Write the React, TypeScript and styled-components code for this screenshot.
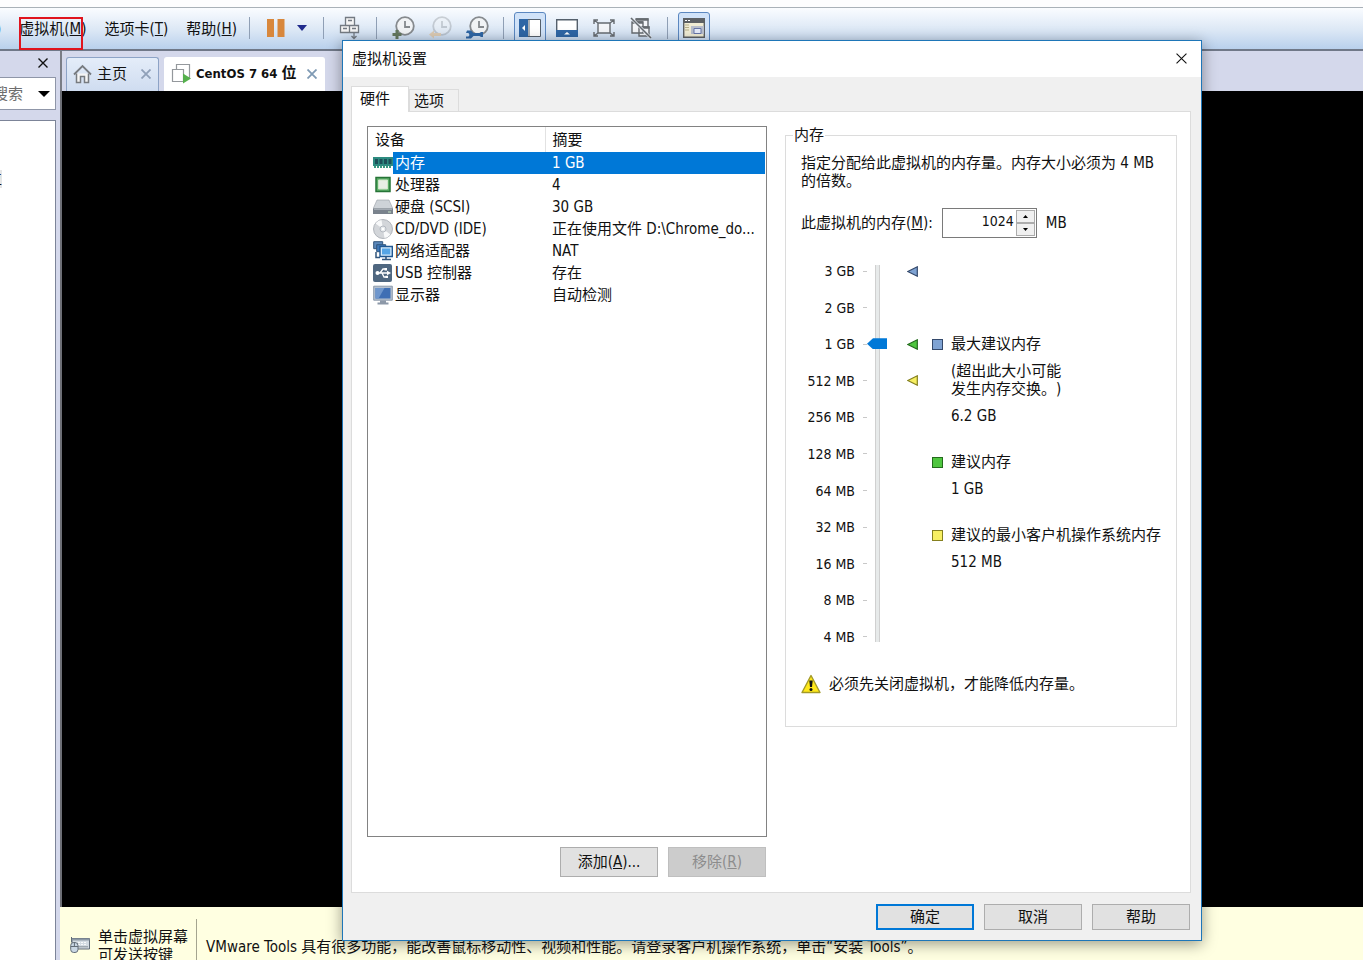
import React, { useState } from "react";
import styled, { createGlobalStyle, css } from "styled-components";

const fontStack = `"DejaVu Sans Condensed", "Noto Sans CJK SC", sans-serif`;

const GlobalStyle = createGlobalStyle`
  *, *::before, *::after { box-sizing: border-box; }
  body { margin: 0; background: #ffffff; text-spacing-trim: space-all; }
  body, button, input { font-family: ${fontStack}; font-size: 15px; line-height: 18px; color: #111111; }
  button { padding: 0; cursor: default; }
`;

const Page = styled.div`
  position: relative;
  display: flex;
  flex-direction: column;
  height: 100vh;
  overflow: hidden;
  background: #d4d8eb;
`;

const TopStrip = styled.div`
  flex: 0 0 8px;
  background: #fdfdfe;
  border-bottom: 1px solid #a9b1b8;
`;

const Toolbar = styled.div`
  display: flex;
  align-items: center;
  flex: 0 0 43px;
  padding-bottom: 2px;
  background: linear-gradient(#fafcff, #dbe7f5 55%, #b9d0ec);
  border-bottom: 2px solid #707888;
`;

const MenuBar = styled.nav`
  display: flex;
  gap: 18px;
  margin-right: 12px;
  padding-top: 2px;
`;

const MenuButton = styled.button<{ $marked?: boolean }>`
  position: relative;
  border: 0;
  background: none;
  white-space: nowrap;
  ${(p) =>
    p.$marked &&
    css`
      &::after {
        content: "";
        position: absolute;
        left: 0;
        top: -3px;
        width: 64px;
        height: 33px;
        border: 2px solid #e0141e;
      }
    `}
`;

const MenuTail = styled.span`
  margin-left: -4px;
`;

const Separator = styled.span`
  width: 1px;
  height: 22px;
  background: #8f9fb5;
`;

const ToolGroup = styled.div`
  display: flex;
  align-items: center;
  gap: 5px;
  padding: 0 10px;
`;

const ToolButton = styled.button<{ $active?: boolean }>`
  display: flex;
  align-items: center;
  justify-content: center;
  width: 32px;
  height: 32px;
  border: 1px solid ${(p) => (p.$active ? "#5b87c0" : "transparent")};
  border-radius: 3px;
  background: ${(p) => (p.$active ? "#d0e2f8" : "none")};
`;

const PowerGroup = styled.div`
  display: flex;
  align-items: center;
  gap: 12px;
  padding: 0 16px 0 17px;
`;

const PlainButton = styled.button`
  display: flex;
  align-items: center;
  justify-content: center;
  border: 0;
  background: none;
`;

const Workspace = styled.div`
  display: flex;
  flex: 1;
  min-height: 0;
`;

const Sidebar = styled.aside`
  display: flex;
  flex-direction: column;
  align-items: flex-end;
  flex: 0 0 56px;
  overflow: hidden;
`;

const SidebarHead = styled.div`
  display: flex;
  align-items: center;
  height: 26px;
  padding: 0 8px 3px 0;
`;

const SearchBox = styled.div`
  display: flex;
  align-items: center;
  width: 80px;
  height: 33px;
  padding: 0 5px 0 16px;
  border: 1px solid #8f96a8;
  background: #ffffff;
  input {
    flex: 1;
    min-width: 0;
    padding: 0;
    border: 0;
    outline: 0;
    background: none;
  }
  input::placeholder { color: #6d6d6d; opacity: 1; }
`;

const Library = styled.div`
  flex: 1;
  width: 100%;
  margin-top: 10px;
  padding-top: 49px;
  border: 1px solid #7c8498;
  border-width: 1px 1px 0 0;
  background: #ffffff;
`;

const LibraryItem = styled.div`
  display: flex;
  justify-content: flex-end;
  width: 2px;
  overflow: hidden;
  background: #e6e6e6;
`;

const Main = styled.main`
  display: flex;
  flex-direction: column;
  flex: 1;
  min-width: 0;
  margin-left: 4px;
`;

const VmTabs = styled.div`
  display: flex;
  gap: 5px;
  height: 40px;
  padding: 6px 0 0 4px;
  border-left: 2px solid #7a7d86;
`;

const VmTab = styled.div<{ $active?: boolean }>`
  display: flex;
  align-items: center;
  padding: 0 7px 0 6px;
  border: 1px solid ${(p) => (p.$active ? "#ffffff" : "#8da3c6")};
  border-bottom: 0;
  border-radius: 3px 3px 0 0;
  background: ${(p) => (p.$active ? "#ffffff" : "linear-gradient(#e4edf9, #cfdcf0)")};
  white-space: nowrap;
  svg { margin-bottom: 2px; }
`;

const VmTabName = styled.span<{ $bold?: boolean }>`
  margin: 0 ${(p) => (p.$bold ? 11 : 14)}px 2px 5px;
  ${(p) => p.$bold && "font-weight: 700;"}
`;

const LatinName = styled.span`
  font-size: 13px;
`;

const Screen = styled.div`
  flex: 1;
  background: #000000;
  border-left: 2px solid #6d6f76;
`;

const StatusBar = styled.footer`
  display: flex;
  flex: 0 0 53px;
  overflow: hidden;
  background: #ffffe1;
  white-space: nowrap;
`;

const StatusHint = styled.div`
  display: flex;
  gap: 8px;
  margin-top: 12px;
  padding: 9px 8px 0 10px;
  border-right: 1px solid #a5a58f;
  svg { margin-top: 9px; }
`;

const StatusText = styled.div`
  padding: 31px 0 0 9px;
`;

const Dialog = styled.section`
  position: absolute;
  left: 342px;
  right: 161px;
  top: 40px;
  border: 1px solid #1e76b8;
  background: #f0f0f0;
  box-shadow: 0 3px 14px rgba(0, 0, 0, 0.4);
`;

const TitleBar = styled.header`
  display: flex;
  align-items: center;
  justify-content: space-between;
  height: 36px;
  padding: 0 14px 1px 9px;
  background: #ffffff;
`;

const TitleText = styled.h1`
  margin: 0;
  font-size: 15px;
  font-weight: 400;
`;

const TabList = styled.div`
  display: flex;
  align-items: flex-end;
  height: 34px;
  padding: 0 8px;
`;

const Tab = styled.button<{ $active?: boolean }>`
  position: relative;
  width: ${(p) => (p.$active ? 58 : 50)}px;
  height: 22px;
  padding: 0 0 0 4px;
  text-align: left;
  border: 1px solid #dcdcdc;
  border-bottom: 0;
  background: #f0f0f0;
  ${(p) =>
    p.$active &&
    css`
      height: 26px;
      margin-bottom: -1px;
      padding: 0 0 2px 8px;
      background: #ffffff;
      z-index: 1;
    `}
`;

const Panel = styled.div`
  display: grid;
  grid-template-columns: 400px 1fr;
  gap: 18px;
  margin: 0 10px 0 8px;
  padding: 14px 13px 15px 15px;
  border: 1px solid #dcdcdc;
  background: #ffffff;
`;

const DeviceBox = styled.div`
  height: 711px;
  padding: 0 1px 0 0;
  border: 1px solid #828282;
`;

const DeviceTable = styled.table`
  width: 100%;
  table-layout: fixed;
  border-collapse: collapse;
  th, td {
    padding: 0 0 0 7px;
    text-align: left;
    font-weight: 400;
    white-space: nowrap;
    overflow: hidden;
  }
  th { height: 25px; }
  th:first-child { border-right: 1px solid #e2e2e2; }
  td { height: 22px; }
  td:first-child { padding: 0 0 0 5px; }
  td:nth-child(2) { padding-left: 2px; }
  svg { display: block; }
`;

const DeviceRow = styled.tr<{ $selected?: boolean }>`
  ${(p) =>
    p.$selected &&
    css`
      td:not(:first-child) {
        background: #0078d7;
        color: #ffffff;
      }
    `}
`;

const ButtonRow = styled.div<{ $footer?: boolean }>`
  display: flex;
  justify-content: flex-end;
  gap: 10px;
  padding: ${(p) => (p.$footer ? "11px 11px 10px" : "10px 1px 0 0")};
`;

const PushButton = styled.button<{ $tall?: boolean; $primary?: boolean }>`
  width: 98px;
  height: ${(p) => (p.$tall ? 30 : 26)}px;
  border: ${(p) => (p.$primary ? "2px solid #0078d7" : "1px solid #adadad")};
  background: #e1e1e1;
  &:disabled {
    border-color: #bfbfbf;
    background: #cccccc;
    color: #8c8c8c;
  }
`;

const Group = styled.fieldset`
  align-self: start;
  min-width: 0;
  height: 601px;
  margin: 0;
  padding: 10px 15px 0;
  border: 1px solid #dcdcdc;
  legend { margin-left: -8px; padding: 0 1px; }
`;

const Paragraph = styled.p`
  margin: 0;
`;

const MemoryRow = styled.div`
  display: flex;
  align-items: center;
  gap: 9px;
  margin-top: 18px;
  height: 30px;
  white-space: nowrap;
`;

const SpinBox = styled.div`
  display: flex;
  width: 95px;
  height: 30px;
  padding: 1px;
  border: 1px solid #7a7a7a;
  background: #ffffff;
  input {
    flex: 1;
    min-width: 0;
    padding: 0 2px 4px 0;
    border: 0;
    outline: 0;
    text-align: right;
    font-size: 14px;
    appearance: textfield;
  }
  input::-webkit-inner-spin-button { appearance: none; }
`;

const Spinner = styled.div`
  display: flex;
  flex-direction: column;
  width: 19px;
  button {
    display: flex;
    align-items: center;
    justify-content: center;
    flex: 1;
    border: 1px solid #acacac;
    background: #f0f0f0;
  }
`;

const Scale = styled.div`
  display: flex;
  margin-top: 24px;
`;

const ScaleList = styled.ul`
  display: flex;
  flex-direction: column;
  justify-content: space-between;
  height: 384px;
  margin: 0;
  padding: 0;
  list-style: none;
  font-size: 14px;
`;

const ScaleLabel = styled.li`
  display: flex;
  align-items: center;
  justify-content: flex-end;
  gap: 8px;
  width: 66px;
  white-space: nowrap;
  &::after {
    content: "";
    width: 4px;
    height: 1px;
    background: #c8c8c8;
  }
`;

const MarkerSlot = styled.li`
  display: flex;
  align-items: center;
  width: 11px;
  height: 18px;
`;

const Slider = styled.input`
  appearance: none;
  writing-mode: vertical-lr;
  direction: rtl;
  width: 20px;
  height: 377px;
  margin: 3px 20px 0 0;
  background: linear-gradient(90deg, #d0d0d0 1px, #e7eaea 1px 4px, #d0d0d0 4px) 8px 0 / 5px 100% no-repeat;
  &::-webkit-slider-thumb {
    appearance: none;
    width: 20px;
    height: 11px;
    background: #0078d7;
    clip-path: polygon(0 50%, 6px 0, 100% 0, 100% 100%, 6px 100%);
  }
`;

const Legend = styled.dl`
  display: grid;
  align-content: start;
  row-gap: 9px;
  margin: 73px 0 0 14px;
  white-space: nowrap;
  dt {
    display: flex;
    align-items: center;
    gap: 8px;
    height: 18px;
  }
  dt:not(:first-child) { margin-top: 19px; }
  dd { margin: 0 0 0 19px; }
`;

const Swatch = styled.span<{ $fill: string; $edge: string }>`
  width: 11px;
  height: 11px;
  border: 1px solid ${(p) => p.$edge};
  background: ${(p) => p.$fill};
`;

const Warning = styled.div`
  display: flex;
  align-items: center;
  gap: 8px;
  margin-top: 28px;
`;

const Cross = ({ size, color, width = 1 }: { size: number; color: string; width?: number }) => (
  <svg width={size} height={size} viewBox="0 0 10 10" stroke={color} strokeWidth={width} fill="none">
    <path d="M.5 .5L9.500 9.500M9.500 .5L.5 9.500" />
  </svg>
);

const Arrow = ({ w, h, color, up }: { w: number; h: number; color: string; up?: boolean }) => (
  <svg width={w} height={h} viewBox="0 0 10 5" preserveAspectRatio="none" fill={color}>
    <path d={up ? "M0 5L5 0L10 5Z" : "M0 0H10L5 5Z"} />
  </svg>
);

const SendKeysIcon = () => (
  <svg width="22" height="24" viewBox="0 0 22 24" fill="#f4f4f4" stroke="#737a82" strokeWidth="1.300">
    <path d="M6.500 1.500h9v8h-9zM1.500 9.500h9v7h-9zM10.500 9.500h9v7h-9z" />
    <path d="M9 4.500h4M4 12.500h4M13 12.500h4M15 16.500v6M12.500 20l2.500 2.500 2.500-2.500" fill="none" />
  </svg>
);

const ClockIcon = ({ kind }: { kind: "add" | "revert" | "manage" }) => (
  <svg width="24" height="24" viewBox="0 0 24 24" fill="none">
    <g opacity={kind === "revert" ? 0.35 : 1}>
      <circle cx="14" cy="10" r="8.800" fill="#f1f3f5" stroke="#868a8e" strokeWidth="1.800" />
      <path d="M14 5v6h5" stroke="#868a8e" strokeWidth="1.800" />
    </g>
    {kind === "add" && <path d="M6 14v9M1.500 18.500h9" stroke="#64785f" strokeWidth="3" />}
    {kind === "revert" && <path d="M1 18.500l5-4v2.500h7v3H6v2.500z" fill="#dccbb4" />}
    {kind === "manage" && (
      <path d="M2 14.500h4l2.500 2.500h6l1.500-1h2v5h-2l-1.500-1h-6L6 22.500H1v-2h2.500l1-1.500-1-2H1z" fill="#2f66a5" />
    )}
  </svg>
);

const LibraryPaneIcon = () => (
  <svg width="22" height="18" viewBox="0 0 22 18">
    <path d="M.5.5h21v17H.5z" fill="#fff" stroke="#55606c" />
    <path d="M0 0h9v18H0z" fill="#2f66a5" />
    <path d="M10 1v16" stroke="#55606c" />
    <path d="M6 6v6L3 9z" fill="#fff" />
  </svg>
);

const ThumbnailPaneIcon = () => (
  <svg width="22" height="18" viewBox="0 0 22 18">
    <path d="M.7.7h20.600v16.600H.7z" fill="#fff" stroke="#55606c" strokeWidth="1.400" />
    <path d="M0 11h22v7H0z" fill="#2f66a5" />
    <path d="M8 15.500h6L11 13z" fill="#fff" />
  </svg>
);

const FullScreenIcon = () => (
  <svg width="22" height="18" viewBox="0 0 22 18" fill="none" stroke="#666b70" strokeWidth="1.400">
    <path d="M5 4h12v10H5z" fill="#f3f5f8" />
    <path d="M1 5V1h4M17 1h4v4M21 13v4h-4M5 17H1v-4M1 1l4 3M21 1l-4 3M21 17l-4-3M1 17l4-3" />
  </svg>
);

const UnityIcon = () => (
  <svg width="22" height="22" viewBox="0 0 22 22" fill="#f3f5f8" stroke="#666b70" strokeWidth="1.400">
    <path d="M6 2h12v10H6z" />
    <path d="M2 5h11v11H2zM9 10h10v9H9z" />
    <path d="M6 2.500h12.500M2 5.500h11M9 10.500h10.500" strokeWidth="2.500" />
    <path d="M1 1l20 20" stroke="#e8eef6" strokeWidth="3" />
    <path d="M1 1l20 20" strokeWidth="1.600" />
  </svg>
);

const ConsoleIcon = () => (
  <svg width="22" height="20" viewBox="0 0 22 20">
    <path d="M.7.7h20.600v18.600H.7z" fill="#f0ecd4" stroke="#5c6064" strokeWidth="1.400" />
    <path d="M0 0h22v5H0z" fill="#5c6064" />
    <path d="M2 2.500h2M5 2.500h2" stroke="#fff" />
    <path d="M2 7h4M2 9.500h4M2 12h4" stroke="#b8b08a" />
    <path d="M8 8h13v8H8z" fill="#b9bfcc" />
    <path d="M11 10.500h7v5h-7z" fill="#e6ecfa" stroke="#6676a8" />
  </svg>
);

const HomeIcon = () => (
  <svg width="19" height="20" viewBox="0 0 19 20" fill="#f5f5f5" stroke="#777b80" strokeWidth="1.500">
    <path d="M3.500 9.500V18.500h4v-6h4v6h4V9.500" />
    <path d="M1 10.500L9.500 2 18 10.500" fill="none" strokeWidth="1.800" />
  </svg>
);

const RunningVmIcon = () => (
  <svg width="20" height="22" viewBox="0 0 20 22" fill="#ffffff" stroke="#94989c" strokeWidth="1.200">
    <path d="M5.500 1.500h13v13h-13z" />
    <path d="M1.500 6.500h11v12h-11z" />
    <path d="M12 10.500v10l8-5z" fill="#55b04c" stroke="none" />
  </svg>
);

const KeyboardIcon = () => (
  <svg width="20" height="16" viewBox="0 0 20 16" stroke="#626d78">
    <path d="M1.500 0v5" />
    <path d="M2 1.500h17.500v10.500H7V6H2z" fill="#d3dbe2" />
    <path d="M2 1.500h17.500v2H2z" fill="#8c99a5" stroke="none" />
    <path d="M5 5.500h12M8 7.500h9" stroke="#f7f9fa" strokeDasharray="2 1" />
    <path d="M8 9.800h10" stroke="#8a949c" />
    <rect x=".7" y="5.500" width="7.300" height="10" rx="3" fill="#c9d7e4" />
    <path d="M4.400 6v3.500M1 9.500h7" />
  </svg>
);

const icons: Record<string, React.ReactNode> = {
  memory: (
    <>
      <path d="M0 4h20v9H0z" fill="#2d8b80" />
      <path d="M2 6h3v5H2zM6.500 6h3v5h-3zM11 6h3v5h-3zM15.500 6h3v5h-3z" fill="#1c5058" />
      <path d="M1 14h18" stroke="#3a9a80" strokeWidth="2" strokeDasharray="2 1" />
    </>
  ),
  cpu: (
    <>
      <path d="M3 2.500h14v14H3z" fill="#5cae68" stroke="#267437" strokeWidth="1.500" />
      <path d="M5.500 5h9v9h-9z" fill="#e8eee5" stroke="#cfe6c8" />
    </>
  ),
  disk: (
    <>
      <path d="M4 3h12l4 9H0z" fill="#ced3d8" stroke="#979ea6" strokeWidth=".6" />
      <path d="M0 11.500h20V17H0z" fill="#7a838d" />
      <path d="M1 12.500h18" stroke="#a4abb3" />
      <path d="M15 15h3" stroke="#c5e4c3" />
    </>
  ),
  disc: (
    <>
      <circle cx="10" cy="10" r="9.500" fill="#d3d6da" stroke="#a2a7ae" strokeWidth=".8" />
      <path d="M10 10L2.500 4.500a9 9 0 0 1 6-3.500zM10 10l7.500 5.500a9 9 0 0 1-6 3.500z" fill="#f8f9fa" />
      <circle cx="10" cy="10" r="3" fill="#e8ebee" stroke="#b4b9c0" />
      <circle cx="10" cy="10" r="1.200" fill="#fff" />
    </>
  ),
  network: (
    <>
      <path d="M.7.7h9v7h-9z" fill="#5b88bb" stroke="#32567c" />
      <path d="M3.700 3.700h9v7h-9z" fill="#3f78b8" stroke="#32567c" />
      <path d="M3 11v5.500h4" stroke="#32567c" strokeWidth="1.500" fill="none" />
      <path d="M7 5.500h12.300v10H7z" fill="#d8ecfb" stroke="#1f5792" strokeWidth="1.400" />
      <path d="M9 7.500h8.300v6H9z" fill="#55a5e6" />
      <path d="M9 18.500h9M13 15.500v3" stroke="#32567c" strokeWidth="1.600" />
    </>
  ),
  usb: (
    <>
      <rect x="0" y="1" width="19" height="18" rx="2" fill="#4f6780" />
      <path d="M4 10h11M7 10l3-4h2M9 10l2 4h2" stroke="#fff" strokeWidth="1.300" fill="none" />
      <circle cx="4.500" cy="10" r="2" fill="#fff" />
      <path d="M14 7.700l4 2.300-4 2.300zM11.500 5h2.500v2.500h-2.500zM12.500 12.700H15V15h-2.500z" fill="#fff" />
    </>
  ),
  display: (
    <>
      <path d="M.7 1.200h18.600v14H.7z" fill="#b5c1d0" stroke="#8c9aac" />
      <path d="M2.500 3h15v10.500h-15z" fill="#3f6fb4" />
      <path d="M2.500 3h9l-6 10.500h-3z" fill="#6f97cd" />
      <path d="M7 15.500h6v2h2.500v2h-11v-2H7z" fill="#8c98a8" />
    </>
  ),
};

const DeviceIcon = ({ name }: { name: string }) => (
  <svg width="20" height="20" viewBox="0 0 20 20" fill="none">
    {icons[name]}
  </svg>
);

const Marker = ({ fill, edge }: { fill: string; edge: string }) => (
  <svg width="11" height="11" viewBox="0 0 11 11">
    <path d="M.8 5.500L10.300.8v9.400z" fill={fill} stroke={edge} strokeWidth="1.200" />
  </svg>
);

const WarningIcon = () => (
  <svg width="20" height="20" viewBox="0 0 20 20">
    <path d="M10 1.500L19 18.500H1z" fill="#ffe81a" stroke="#a39a28" strokeWidth="1.400" strokeLinejoin="round" />
    <path d="M8.300 6.500h3.400L11 13H9z" fill="#111" />
    <circle cx="10" cy="15.500" r="1.500" fill="#111" />
  </svg>
);

const devices = [
  { icon: "memory", name: "内存", summary: "1 GB" },
  { icon: "cpu", name: "处理器", summary: "4" },
  { icon: "disk", name: "硬盘 (SCSI)", summary: "30 GB" },
  { icon: "disc", name: "CD/DVD (IDE)", summary: "正在使用文件 D:\\Chrome_do..." },
  { icon: "network", name: "网络适配器", summary: "NAT" },
  { icon: "usb", name: "USB 控制器", summary: "存在" },
  { icon: "display", name: "显示器", summary: "自动检测" },
];

const steps = ["3 GB", "2 GB", "1 GB", "512 MB", "256 MB", "128 MB", "64 MB", "32 MB", "16 MB", "8 MB", "4 MB"];

const blue = { fill: "#7fa3d3", edge: "#34496b" };
const green = { fill: "#4fc63f", edge: "#236b1c" };
const yellow = { fill: "#f7ef62", edge: "#85801f" };
const markers: Record<string, { fill: string; edge: string }> = { "3 GB": blue, "1 GB": green, "512 MB": yellow };

export default function App() {
  const [selected, setSelected] = useState(0);
  const [level, setLevel] = useState(8);
  const [memory, setMemory] = useState(1024);

  return (
    <Page>
      <GlobalStyle />
      <TopStrip />
      <Toolbar>
        <MenuBar>
          <MenuTail>)</MenuTail>
          <MenuButton $marked>虚拟机(<u>M</u>)</MenuButton>
          <MenuButton>选项卡(<u>T</u>)</MenuButton>
          <MenuButton>帮助(<u>H</u>)</MenuButton>
        </MenuBar>
        <Separator />
        <PowerGroup>
          <PlainButton aria-label="暂停">
            <svg width="18" height="18" viewBox="0 0 18 18" fill="#d8873c"><path d="M0 0h7v18H0zM10.500 0h7v18h-7z" /></svg>
          </PlainButton>
          <PlainButton aria-label="电源选项"><Arrow w={10} h={6} color="#1f2a8c" /></PlainButton>
        </PowerGroup>
        <Separator />
        <ToolGroup>
          <ToolButton aria-label="发送按键"><SendKeysIcon /></ToolButton>
        </ToolGroup>
        <Separator />
        <ToolGroup>
          <ToolButton aria-label="拍摄快照"><ClockIcon kind="add" /></ToolButton>
          <ToolButton aria-label="恢复快照"><ClockIcon kind="revert" /></ToolButton>
          <ToolButton aria-label="管理快照"><ClockIcon kind="manage" /></ToolButton>
        </ToolGroup>
        <Separator />
        <ToolGroup>
          <ToolButton $active aria-label="显示库"><LibraryPaneIcon /></ToolButton>
          <ToolButton aria-label="缩略图栏"><ThumbnailPaneIcon /></ToolButton>
          <ToolButton aria-label="全屏"><FullScreenIcon /></ToolButton>
          <ToolButton aria-label="Unity"><UnityIcon /></ToolButton>
        </ToolGroup>
        <Separator />
        <ToolGroup>
          <ToolButton $active aria-label="控制台视图"><ConsoleIcon /></ToolButton>
        </ToolGroup>
      </Toolbar>

      <Workspace>
        <Sidebar>
          <SidebarHead>
            <PlainButton aria-label="关闭库"><Cross size={10} color="#111" width={1.4} /></PlainButton>
          </SidebarHead>
          <SearchBox>
            <input aria-label="搜索" placeholder="搜索" />
            <PlainButton aria-label="展开搜索"><Arrow w={12} h={6} color="#000" /></PlainButton>
          </SearchBox>
          <Library>
            <LibraryItem>位</LibraryItem>
          </Library>
        </Sidebar>
        <Main>
          <VmTabs>
            <VmTab>
              <HomeIcon />
              <VmTabName>主页</VmTabName>
              <PlainButton aria-label="关闭主页"><Cross size={10} color="#8fa0b8" width={1.8} /></PlainButton>
            </VmTab>
            <VmTab $active>
              <RunningVmIcon />
              <VmTabName $bold><LatinName>CentOS 7 64 </LatinName>位</VmTabName>
              <PlainButton aria-label="关闭 CentOS"><Cross size={10} color="#7f9ab4" width={1.8} /></PlainButton>
            </VmTab>
          </VmTabs>
          <Screen />
          <StatusBar>
            <StatusHint>
              <KeyboardIcon />
              <span>单击虚拟屏幕<br />可发送按键</span>
            </StatusHint>
            <StatusText>
              VMware Tools 具有很多功能，能改善鼠标移动性、视频和性能。请登录客户机操作系统，单击“安装 Tools”。
            </StatusText>
          </StatusBar>
        </Main>
      </Workspace>

      <Dialog role="dialog" aria-labelledby="dialog-title">
        <TitleBar>
          <TitleText id="dialog-title">虚拟机设置</TitleText>
          <PlainButton aria-label="关闭"><Cross size={11} color="#111" /></PlainButton>
        </TitleBar>
        <TabList role="tablist">
          <Tab role="tab" $active aria-selected>硬件</Tab>
          <Tab role="tab" aria-selected={false}>选项</Tab>
        </TabList>
        <Panel>
          <div>
            <DeviceBox>
              <DeviceTable>
                <colgroup>
                  <col width="25" />
                  <col width="152" />
                  <col />
                </colgroup>
                <thead>
                  <tr><th colSpan={2}>设备</th><th>摘要</th></tr>
                </thead>
                <tbody>
                  {devices.map((d, i) => (
                    <DeviceRow key={d.name} $selected={i === selected} onClick={() => setSelected(i)}>
                      <td><DeviceIcon name={d.icon} /></td>
                      <td>{d.name}</td>
                      <td>{d.summary}</td>
                    </DeviceRow>
                  ))}
                </tbody>
              </DeviceTable>
            </DeviceBox>
            <ButtonRow>
              <PushButton $tall>添加(<u>A</u>)...</PushButton>
              <PushButton $tall disabled>移除(<u>R</u>)</PushButton>
            </ButtonRow>
          </div>
          <Group>
            <legend>内存</legend>
            <Paragraph>指定分配给此虚拟机的内存量。内存大小必须为 4 MB 的倍数。</Paragraph>
            <MemoryRow>
              <label htmlFor="memory">此虚拟机的内存(<u>M</u>):</label>
              <SpinBox>
                <input id="memory" type="number" value={memory} onChange={(e) => setMemory(Number(e.target.value))} />
                <Spinner>
                  <button aria-label="增加" onClick={() => setMemory(memory + 4)}><Arrow w={5} h={3} color="#000" up /></button>
                  <button aria-label="减少" onClick={() => setMemory(memory - 4)}><Arrow w={5} h={3} color="#000" /></button>
                </Spinner>
              </SpinBox>
              <span>MB</span>
            </MemoryRow>
            <Scale>
              <ScaleList>
                {steps.map((s) => <ScaleLabel key={s}>{s}</ScaleLabel>)}
              </ScaleList>
              <Slider
                type="range"
                aria-label="内存大小"
                min={0}
                max={10}
                value={level}
                onChange={(e) => setLevel(Number(e.target.value))}
              />
              <ScaleList aria-hidden>
                {steps.map((s) => <MarkerSlot key={s}>{markers[s] && <Marker {...markers[s]} />}</MarkerSlot>)}
              </ScaleList>
              <Legend>
                <dt><Swatch $fill={blue.fill} $edge={blue.edge} />最大建议内存</dt>
                <dd>(超出此大小可能<br />发生内存交换。)</dd>
                <dd>6.2 GB</dd>
                <dt><Swatch $fill={green.fill} $edge={green.edge} />建议内存</dt>
                <dd>1 GB</dd>
                <dt><Swatch $fill={yellow.fill} $edge={yellow.edge} />建议的最小客户机操作系统内存</dt>
                <dd>512 MB</dd>
              </Legend>
            </Scale>
            <Warning>
              <WarningIcon />
              必须先关闭虚拟机，才能降低内存量。
            </Warning>
          </Group>
        </Panel>
        <ButtonRow $footer>
          <PushButton $primary>确定</PushButton>
          <PushButton>取消</PushButton>
          <PushButton>帮助</PushButton>
        </ButtonRow>
      </Dialog>
    </Page>
  );
}
